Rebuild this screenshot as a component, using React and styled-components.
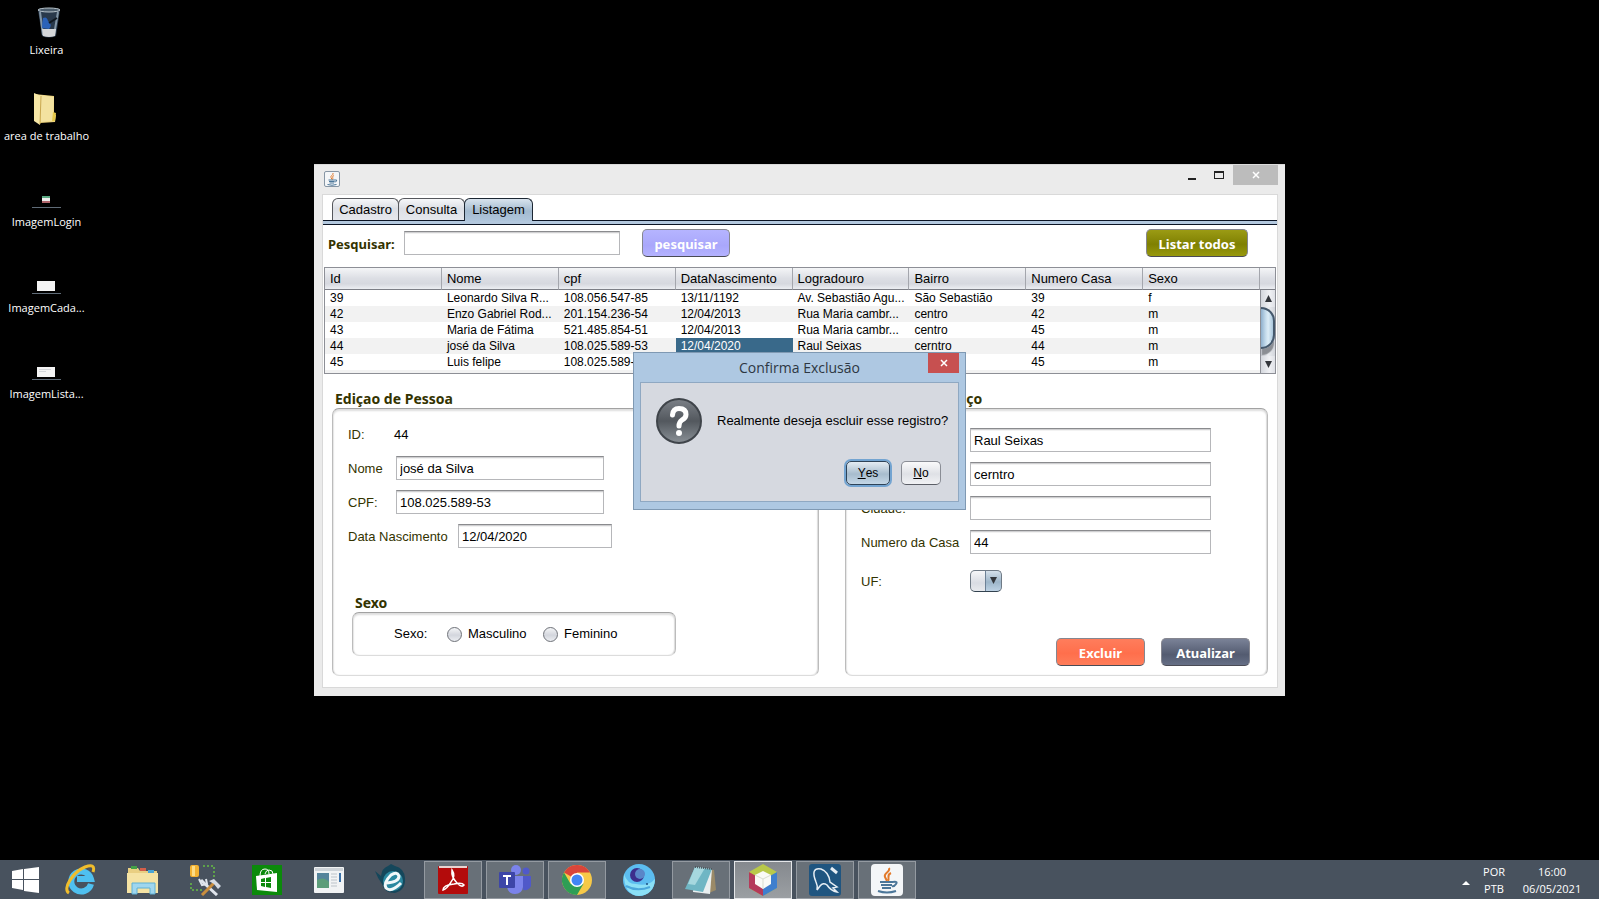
import React from "react";
import styled, { createGlobalStyle, css } from "styled-components";

const swing = '"Liberation Sans", Arial, sans-serif';
const segoe = '"Open Sans", "Segoe UI", sans-serif';
const segoeBold = '"Noto Sans", "Segoe UI", sans-serif';

const GlobalStyle = createGlobalStyle`
  *, *::before, *::after { box-sizing: border-box; }
  body { margin: 0; background: #000; }
  button, input, select { font: inherit; margin: 0; }
`;

const Screen = styled.div`
  min-height: 100vh;
  display: flex;
  flex-direction: column;
  background: #000;
  font: 12px/16px ${swing};
  color: #000;
`;

const Desktop = styled.main`
  position: relative;
  flex: 1;
  display: flex;
  align-items: center;
  justify-content: center;
`;

/* ---------- desktop shortcuts ---------- */

const Shortcuts = styled.nav`
  position: absolute;
  left: 0;
  top: 0;
  width: 93px;
`;

const Shortcut = styled.a`
  display: flex;
  flex-direction: column;
  align-items: center;
  height: 86px;
  padding-top: 6px;
  color: #fff;
  text-decoration: none;
  font: 11px/16px ${segoe};
  white-space: nowrap;
  svg { margin-bottom: 2px; flex: none; }
`;

/* ---------- application window ---------- */

const Window = styled.section`
  position: relative;
  width: min(971px, 100%);
  padding: 0 7px 8px 8px;
  background: #ebebeb;
  border-top: 1px solid #dadada;
`;

const TitleBar = styled.header`
  display: flex;
  align-items: flex-start;
  height: 29px;
  padding-left: 2px;
  > svg { margin-top: 6px; }
`;

const WindowControls = styled.div`
  display: flex;
  margin-left: auto;
`;

const Control = styled.button`
  display: grid;
  place-items: center;
  width: ${(p) => p.$width}px;
  height: 20px;
  padding: 0;
  border: 0;
  background: ${(p) => p.$bg || "transparent"};
`;

const Content = styled.div`
  padding: 3px 0 11px;
  background: #fff;
  border: 1px solid #d9d9d9;
`;

const Tabs = styled.div`
  display: flex;
  height: 22px;
  padding-left: 9px;
`;

const Tab = styled.button`
  position: relative;
  height: 22px;
  padding: 0;
  width: ${(p) => p.$width}px;
  margin-right: -1px;
  border: 1px solid #55575c;
  border-bottom: 0;
  border-radius: 6px 6px 0 0;
  background: linear-gradient(#f6f7f9, #dcdfe5 45%, #e6e8ed);
  font-size: 13px;
  ${(p) =>
    p.$active &&
    css`
      height: 23px;
      z-index: 1;
      border-color: #1c2733;
      background: linear-gradient(#d8e3ed, #a3bacf 55%, #b0c6dc);
    `}
`;

const TabStrip = styled.div`
  height: 5px;
  background: #b3c8de;
  border: solid #0b1424;
  border-width: 1px 0;
`;

const SearchRow = styled.form`
  display: flex;
  align-items: center;
  padding: 4px 29px 10px 5px;
`;

const SearchLabel = styled.label`
  width: 76px;
  padding-top: 2px;
  font: bold 13px/20px ${segoeBold};
  color: #333300;
`;

const TextInput = styled.input`
  width: ${(p) => p.$width}px;
  height: 24px;
  padding: 1px 3px 0;
  background: #fff;
  border: 1px solid #b6b7ba;
  border-top-color: #8a8b8e;
  border-radius: 0;
  outline: 0;
  box-shadow: inset 0 1px 0 #cfcfd1, inset 0 2px 0 #f2f2f2;
  font-size: 13px;
  color: #000;
`;

const tones = {
  lilac: "linear-gradient(#b5b4ff, #a9a7fb 60%, #b4b2ff)",
  olive: "linear-gradient(#9b9b14, #7f8002 55%, #98990c)",
  coral: "linear-gradient(#ff7d5c, #ff6f4c 55%, #ff7d5a)",
  slate: "linear-gradient(#7a8297, #535b70 60%, #666f86)",
};

const ActionButton = styled.button`
  width: ${(p) => p.$width}px;
  height: 28px;
  padding: 2px 0 0;
  border: 1px solid #85868f;
  border-bottom-color: #4a4b55;
  border-radius: 5px;
  background: ${(p) => tones[p.$tone]};
  color: #fff;
  font: bold 13px/20px ${segoeBold};
`;

const SearchButton = styled(ActionButton)`
  margin-left: 22px;
`;

const ListAllButton = styled(ActionButton)`
  margin-left: auto;
`;

/* ---------- table ---------- */

const TableFrame = styled.div`
  display: flex;
  height: 107px;
  margin: 0 1px;
  border: 1px solid #8d8f96;
  background: #f2f2f2;
`;

const headerFill = css`
  background: linear-gradient(#f4f5f7, #dcdee4 50%, #d6d8df 75%, #eceef2);
  border-bottom: 1px solid #7c7e86;
`;

const TableArea = styled.div`
  flex: 1;
  min-width: 0;
`;

const Table = styled.table`
  width: 100%;
  table-layout: fixed;
  border-collapse: separate;
  border-spacing: 0;
  th, td {
    padding: 0 5px;
    overflow: hidden;
    white-space: nowrap;
    text-align: left;
    font-weight: normal;
  }
  th {
    ${headerFill}
    height: 22px;
    border-right: 1px solid #a4a6ad;
    font-size: 13px;
    line-height: 20px;
  }
  td { height: 16px; padding-top: 1px; line-height: 15px; }
  tbody tr { background: #fff; }
  tbody tr:nth-child(even) { background: #f2f2f2; }
`;

const Cell = styled.td`
  ${(p) => p.$selected && css`background: #39698a; color: #fff;`}
`;

const ScrollColumn = styled.div`
  flex: none;
  width: 15px;
  display: flex;
  flex-direction: column;
`;

const ScrollCorner = styled.div`
  ${headerFill}
  height: 22px;
`;

const ScrollBar = styled.div`
  flex: 1;
  display: flex;
  flex-direction: column;
  overflow: hidden;
  border-left: 1px solid #8d8f96;
  background: linear-gradient(90deg, #bfc2c9, #eceef1 50%, #d3d6dc);
`;

const ScrollStep = styled.button`
  display: grid;
  place-items: center;
  height: 17px;
  padding: 0;
  border: 0;
  background: linear-gradient(90deg, #d4d7dd, #f0f1f4 60%, #dfe1e6);
`;

const ScrollTrack = styled.div`
  flex: 1;
`;

const ScrollThumb = styled.div`
  height: 42px;
  border: 2px solid #45586c;
  border-left: 0;
  border-radius: 0 15px 15px 0;
  background: linear-gradient(90deg, #8fb0cd, #c6dcec 40%, #dcecf6 60%, #a9c6dc);
  box-shadow: 0 7px 1px -1px #8b8e94;
`;

/* ---------- edit panels ---------- */

const Panels = styled.div`
  display: flex;
  gap: 26px;
  padding: 16px 9px 0;
`;

const Group = styled.section`
  flex: ${(p) => p.$grow} 1 0;
  min-width: 0;
  display: flex;
  flex-direction: column;
`;

const GroupTitle = styled.h2`
  margin: 0 3px;
  font: bold 14px/18px ${segoeBold};
  color: #333300;
  white-space: nowrap;
`;

const frame = css`
  border: 1px solid #bcbcbc;
  border-top-color: #a2a2a2;
  border-bottom-color: #dcdcdc;
  border-radius: 7px;
  box-shadow: inset 0 2px 2px #dedede, inset 1px 0 1px #ececec, inset -1px 0 1px #dcdcdc;
`;

const Panel = styled.div`
  ${frame}
  flex: 1;
  min-height: 268px;
  display: flex;
  flex-direction: column;
  gap: 10px;
  padding: ${(p) => p.$top}px 17px ${(p) => p.$bottom}px 15px;
`;

const Field = styled.div`
  display: flex;
  align-items: center;
  min-height: 24px;
  font-size: 13px;
  color: #333300;
`;

const FieldLabel = styled.label`
  flex: none;
  width: ${(p) => p.$width}px;
  padding-top: 2px;
  white-space: nowrap;
`;

const Value = styled.output`
  padding-top: 2px;
  color: #000;
`;

const StateField = styled(Field)`
  margin-top: 5px;
`;

const SelectBox = styled.span`
  position: relative;
  display: inline-flex;
  svg { position: absolute; right: 5px; top: 7px; pointer-events: none; }
`;

const Select = styled.select`
  appearance: none;
  width: 32px;
  height: 22px;
  border: 1px solid #6f7a86;
  border-bottom-color: #33424f;
  border-radius: 5px;
  background: linear-gradient(90deg, transparent 14px, #6d8196 14px 15px, transparent 15px),
    linear-gradient(#d5e0ea, #9db5c9 55%, #bdd2e4) 15px 0 / 16px 100% no-repeat,
    linear-gradient(#f6f7f9, #d9dce3 60%, #e8eaee);
`;

const SexGroup = styled.fieldset`
  width: 324px;
  max-width: 100%;
  margin: auto 0 0 4px;
  padding: 0;
  border: 0;
  color: #000;
`;

const SexTitle = styled.legend`
  padding: 0;
  margin: 0 3px;
  font: bold 14px/18px ${segoeBold};
  color: #333300;
`;

const SexBox = styled.div`
  ${frame}
  height: 44px;
  display: flex;
  align-items: center;
  padding-left: 41px;
  font-size: 13px;
`;

const SexCaption = styled.span`
  width: 53px;
`;

const RadioLabel = styled.label`
  display: flex;
  align-items: center;
  gap: 6px;
  width: 96px;
`;

const Radio = styled.input`
  appearance: none;
  width: 15px;
  height: 15px;
  border: 1px solid #6e7178;
  border-radius: 50%;
  background: linear-gradient(#f4f5f7, #d3d6dd 55%, #eceef2);
`;

const Actions = styled.div`
  display: flex;
  justify-content: flex-end;
  gap: 16px;
  margin-top: auto;
`;

/* ---------- confirmation dialog ---------- */

const DialogLayer = styled.div`
  position: absolute;
  inset: 0;
  display: grid;
  place-items: center;
  z-index: 2;
`;

const Dialog = styled.div`
  width: 333px;
  padding: 0 6px 7px;
  background: #aec8e2;
  border: 1px solid #7f99b3;
`;

const DialogBar = styled.div`
  display: grid;
  grid-template-columns: 31px 1fr 31px;
  height: 29px;
  h1 {
    margin: 0;
    text-align: center;
    font: 14px/30px ${segoe};
    color: #2d3742;
  }
`;

const DialogBody = styled.div`
  display: flex;
  flex-direction: column;
  justify-content: space-between;
  height: 120px;
  padding: 15px 17px 16px 15px;
  background: #d6d9e0;
  border: 1px solid #8fa8c2;
`;

const Message = styled.div`
  display: flex;
  align-items: center;
  gap: 15px;
  font-size: 13px;
  white-space: nowrap;
  svg { flex: none; }
`;

const DialogActions = styled.div`
  display: flex;
  justify-content: flex-end;
  gap: 11px;
`;

const DialogButton = styled.button`
  width: ${(p) => p.$width}px;
  height: 24px;
  padding: 1px 0 0;
  border: 1px solid #8a8d95;
  border-bottom-color: #5c5f67;
  border-radius: 5px;
  background: linear-gradient(#fafafb, #dfe1e6 55%, #f1f2f5);
  font-size: 12px;
  font-kerning: none;
  ${(p) =>
    p.$focused &&
    css`
      border-color: #2e4358;
      background: linear-gradient(#e4ecf3, #a7bccd 55%, #c4d7e6);
      box-shadow: 0 0 0 2px #73a4d1;
    `}
`;

/* ---------- taskbar ---------- */

const Taskbar = styled.footer`
  display: flex;
  height: 39px;
  padding-top: 1px;
  background: #48525e;
  overflow: hidden;
`;

const StartButton = styled.button`
  display: grid;
  place-items: center;
  width: 50px;
  padding: 0;
  border: 0;
  background: transparent;
`;

const TaskButton = styled.button`
  display: grid;
  place-items: center;
  width: 58px;
  height: 38px;
  margin: 0 2px;
  padding: 0;
  border: 1px solid transparent;
  background: transparent;
  ${(p) =>
    p.$state === "open" &&
    css`
      border-color: #949aa1;
      background: #687078;
    `}
  ${(p) =>
    p.$state === "active" &&
    css`
      border-color: #e4e6e9;
      background: linear-gradient(#85898e, #9b9fa3);
    `}
`;

const Tray = styled.div`
  display: flex;
  align-items: center;
  margin-left: auto;
  padding-right: 7px;
  color: #fff;
  font: 11px/17px ${segoe};
  text-align: center;
  white-space: nowrap;
`;

const TrayArrow = styled.button`
  width: 20px;
  height: 20px;
  padding: 0;
  border: 0;
  background: transparent;
`;

const TrayText = styled.div`
  width: ${(p) => p.$width}px;
  height: 34px;
`;

/* ---------- drawings ---------- */

const Svg = ({ w, h = w, box, children }) => (
  <svg width={w} height={h} viewBox={box || `0 0 ${w} ${h}`} aria-hidden="true">
    {children}
  </svg>
);

const BinIcon = () => (
  <Svg w={30} h={34}>
    <path d="M6 4 L28 4 L24 30 Q17 33 10 30 Z" fill="#29394b" />
    <path d="M8 6 L11 29 M26 6 L22 29" stroke="#8396a6" strokeWidth="2" />
    <ellipse cx="17" cy="4" rx="11" ry="2" fill="#4c5d6c" stroke="#b8c4cc" />
    <path d="M11 12 q4 -2 5 3 q5 4 1 8 l-7 -1 q0 -5 1 -10z" fill="#2b62b8" />
    <path d="M17 17 L25 12" stroke="#101820" strokeWidth="2" />
    <path d="M10 23 L24 23 L23 30 Q17 32 11 30 Z" fill="#d5d7d9" />
  </Svg>
);

const FolderIcon = () => (
  <Svg w={30} h={34}>
    <path d="M2 2 L22 4 L22 22 L24 23 L23 30 L8 31 L2 28 Z" fill="#ecd27c" />
    <path d="M8 3 L22 5 L21 29 L9 30 Z" fill="#f3e2a0" />
    <path d="M2 1 L9 4 L8 33 L2 29 Z" fill="#f7e7a6" />
    <path d="M9 4 L8 32" stroke="#c9a850" />
    <path d="M21 20 L24 21 L23 29 L20 29 Z" fill="#e6c84a" />
  </Svg>
);

const ThumbIcon = ({ kind }) => (
  <Svg w={30} h={34}>
    {kind === "login" ? (
      <>
        <rect x="10" y="18" width="8" height="7" fill="#eee" />
        <rect x="10" y="18" width="8" height="2" fill="#5aa982" />
        <rect x="10" y="23" width="8" height="2" fill="#b0646a" />
      </>
    ) : (
      <>
        <rect x="5" y="17" width="18" height="10" fill="#f4f4f4" />
        {kind === "list" && <path d="M7 19.500h12M7 21.500h7" stroke="#d3d6da" />}
      </>
    )}
    <path d="M0 29.500h29" stroke="#5f6b77" />
  </Svg>
);

const JavaCup = ({ size = 16 }) => (
  <Svg w={size} box="0 0 32 32">
    <rect x="1" y="1" width="30" height="30" rx="3" fill="#f4f6f8" stroke={size > 20 ? "#f4f6f8" : "#8796a5"} strokeWidth="2" />
    <path d="M18 4 C20 8 12 9 14 13 Q15 15 16 17 M20 9 C15 11 19 14 17 17" fill="none" stroke="#e37b2c" strokeWidth="2" />
    <path d="M9 18h13M10 21h11M11 24h9M22 18q5-1 3 2t-4 2" fill="none" stroke="#4b7699" strokeWidth="2" />
    <path d="M7 27q9 3 18 0" fill="none" stroke="#4b7699" strokeWidth="2" />
  </Svg>
);

const QuestionIcon = () => (
  <Svg w={46}>
    <defs>
      <linearGradient id="ball" x1="0" y1="0" x2="0" y2="1">
        <stop offset="0" stopColor="#7b8087" />
        <stop offset="0.500" stopColor="#53585e" />
        <stop offset="1" stopColor="#8a9096" />
      </linearGradient>
    </defs>
    <circle cx="23" cy="23" r="22" fill="url(#ball)" stroke="#3f444a" strokeWidth="2" />
    <path d="M16.500 17 Q17 10.500 23 10.500 Q30 10.500 30 16.500 Q30 20 26 22 Q23 24 23 28" fill="none" stroke="#fff" strokeWidth="5" strokeLinecap="round" />
    <circle cx="23" cy="35" r="3" fill="#fff" />
  </Svg>
);

const Cross = ({ color }) => (
  <Svg w={8} h={8}>
    <path d="M1 1L7 7M7 1L1 7" stroke={color} strokeWidth="1.500" />
  </Svg>
);

const Triangle = ({ up, w = 7, color = "#33363b" }) => (
  <Svg w={w} h={7} box="0 0 7 7">
    <path d={up ? "M0 7L3.500 0L7 7Z" : "M0 0H7L3.500 7Z"} fill={color} />
  </Svg>
);

const StartIcon = () => (
  <Svg w={27} h={26}>
    <path d="M0 4L11 2V12H0ZM12 2L27 0V12H12ZM0 13H11V23L0 21ZM12 13H27V26L12 24Z" fill="#fff" />
  </Svg>
);

const IeIcon = () => (
  <Svg w={32}>
    <path d="M26 20 A10 10 0 1 1 26 15 H12" fill="none" stroke="#4fc0f0" strokeWidth="6" />
    <path d="M4 29 C-3 25 8 8 20 3 Q31 -1 28 8" fill="none" stroke="#f0bd2c" strokeWidth="3" />
  </Svg>
);

const ExplorerIcon = () => (
  <Svg w={34} h={32}>
    <path d="M2 4h10l2 3h17v22h-29z" fill="#e9cf82" />
    <rect x="5" y="2" width="6" height="3" fill="#43a047" />
    <rect x="14" y="4" width="6" height="3" fill="#d35f4a" />
    <rect x="22" y="6" width="6" height="3" fill="#4aa6d6" />
    <path d="M1 9h31v20h-31z" fill="#f5e3a4" />
    <path d="M6 30v-11h23v11h-5v-6h-13v6z" fill="#9fd6ee" stroke="#5fb0d4" />
  </Svg>
);

const ToolsIcon = () => (
  <Svg w={32}>
    <rect x="1" y="1" width="9" height="12" rx="2" fill="#f2b233" />
    <rect x="3" y="2" width="3" height="10" fill="#fbdc86" />
    <path d="M14 2h11v11M2 19v7h11" fill="none" stroke="#5ea24a" strokeWidth="2" strokeDasharray="2 2" />
    <path d="M12 16l4 4L28 31" stroke="#dfe5ec" strokeWidth="3" />
    <path d="M26 18L13 31" stroke="#c98e3e" strokeWidth="3" />
    <path d="M20 17l5-2 7 7-3 3-4-5z" fill="#d4dbe4" />
    <path d="M10 15l3 6 5-1-1-5" fill="none" stroke="#dfe5ec" strokeWidth="2" />
  </Svg>
);

const StoreIcon = () => (
  <Svg w={30}>
    <rect width="30" height="30" fill="#0b8a0b" />
    <path d="M4 11L25 8V27L5 25Z" fill="#fff" />
    <path d="M8 11Q8 4 13 4Q17 4 17 9M13 9Q14 5 17 5Q21 5 21 9" fill="none" stroke="#fff" strokeWidth="1" />
    <path d="M9 14L13 13V17H9ZM14 13L19 12V17H14ZM9 18H13V22L9 21ZM14 18H19V23L14 22Z" fill="#0b8a0b" />
  </Svg>
);

const WindowDocIcon = () => (
  <Svg w={30} h={26}>
    <rect width="30" height="26" rx="1" fill="#f1f3f4" />
    <path d="M1 1h28v3h-28z" fill="#cdd3d8" />
    <rect x="3" y="6" width="12" height="15" fill="#55849b" />
    <path d="M3 21V13Q10 9 15 15V21Z" fill="#5c9d79" />
    <path d="M17 7h6M17 10h6M17 13h6M17 16h6M17 19h6" stroke="#bcc3c9" />
    <rect x="25" y="6" width="2" height="9" fill="#3a71a8" />
  </Svg>
);

const TealEIcon = () => (
  <Svg w={32}>
    <path d="M0 7L6 12Q7 4 13 2L16 0L20 2Q29 4 30 14Q31 26 20 29Q9 29 7 20Q3 15 0 7Z" fill="#15475b" />
    <circle cx="18" cy="17" r="10" fill="#2b88a0" />
    <path d="M12 19Q24 18 24 12Q22 7 16 11Q8 19 11 24Q16 29 26 19" fill="none" stroke="#f2f8fa" strokeWidth="3" />
  </Svg>
);

const AcrobatIcon = () => (
  <Svg w={30} h={28}>
    <rect width="30" height="28" rx="1" fill="#b30b0b" />
    <path d="M1 0H29V2H1Z" fill="#e9d3d0" />
    <path d="M14 4Q18 10 13 16Q9 23 5 24Q5 19 16 18Q24 16 26 19Q24 22 19 17Q13 11 14 4Z" fill="none" stroke="#fff" strokeWidth="1.500" />
  </Svg>
);

const TeamsIcon = () => (
  <Svg w={34} h={32}>
    <circle cx="18" cy="6" r="5" fill="#7b83eb" />
    <circle cx="28" cy="7" r="3.500" fill="#5059c9" />
    <path d="M23 12h10v10q-2 5-8 4z" fill="#5059c9" />
    <path d="M10 12h15v11q-1 7-8 7t-8-7z" fill="#7b83eb" />
    <rect x="1" y="8" width="16" height="16" rx="1" fill="#3d46a8" />
    <path d="M5 12h8M9 12v9" stroke="#fff" strokeWidth="2" />
  </Svg>
);

const ChromeIcon = () => (
  <Svg w={30}>
    <circle cx="15" cy="15" r="15" fill="#f7c948" />
    <path d="M15 15L2 7.500A15 15 0 0 1 28 7.500H15Z" fill="#d9453a" />
    <path d="M2 7.500A15 15 0 0 0 15 30L21.500 18.700L8.500 18.700Z" fill="#2f9e55" />
    <circle cx="15" cy="15" r="7" fill="#fff" />
    <circle cx="15" cy="15" r="5.500" fill="#4285f4" />
  </Svg>
);

const SwirlIcon = () => (
  <Svg w={32}>
    <circle cx="16" cy="16" r="16" fill="#5cbdf0" />
    <path d="M1 10Q4 20 13 20Q25 23 32 15Q31 31 16 32Q1 31 1 10Z" fill="#8be0f6" />
    <path d="M3 22Q14 28 27 23" fill="none" stroke="#4aa8dc" strokeWidth="2" />
    <circle cx="14" cy="11" r="7" fill="#3c2e8c" />
    <circle cx="17" cy="10" r="5" fill="#5a86c8" />
    <circle cx="24" cy="20" r="1" fill="#1d4f80" />
  </Svg>
);

const NotepadIcon = () => (
  <Svg w={32} h={30}>
    <path d="M10 2L29 5L31 25L24 28Z" fill="#9a8a68" />
    <path d="M10 2L27 4L25 29L8 27Z" fill="#e9eff0" />
    <path d="M10 2L27 4L18 27L0 24Z" fill="#6fb6c4" />
    <path d="M10 2L20 3L10 20L3 19Z" fill="#a6d8df" />
    <path d="M10 2L27 4" stroke="#4d555c" strokeWidth="2" strokeDasharray="1 1" />
  </Svg>
);

const NetBeansIcon = () => (
  <Svg w={30} h={32}>
    <path d="M15 0L29 8V24L15 32L1 24V8Z" fill="#b9c94a" />
    <path d="M1 8L8 12V20L15 24V32L1 24Z" fill="#b53a5a" />
    <path d="M29 8L22 12V20L15 24V32L29 24Z" fill="#3f7fce" />
    <path d="M15 7L23 11V20L15 25L7 20V11Z" fill="#fafaf6" />
    <path d="M7 11L15 15V25M15 15L23 11" fill="none" stroke="#d9ddd0" />
  </Svg>
);

const WorkbenchIcon = () => (
  <Svg w={32}>
    <rect width="32" height="32" rx="3" fill="#1f5580" />
    <path d="M8 26Q9 22 7 18Q1 3 12 5Q20 8 21 18L28 23L24 24L28 28Q22 27 18 21Q14 18 11 22Z" fill="none" stroke="#e6eef4" strokeWidth="1.500" />
    <path d="M22 4l6 5" stroke="#e6eef4" strokeWidth="3" />
  </Svg>
);

/* ---------- data ---------- */

const shortcuts = [
  ["Lixeira", <BinIcon />],
  ["area de trabalho", <FolderIcon />],
  ["ImagemLogin", <ThumbIcon kind="login" />],
  ["ImagemCada...", <ThumbIcon kind="form" />],
  ["ImagemLista...", <ThumbIcon kind="list" />],
];

const columns = ["Id", "Nome", "cpf", "DataNascimento", "Logradouro", "Bairro", "Numero Casa", "Sexo"];

const rows = [
  ["39", "Leonardo Silva R...", "108.056.547-85", "13/11/1192", "Av. Sebastião Agu...", "São Sebastião", "39", "f"],
  ["42", "Enzo Gabriel Rod...", "201.154.236-54", "12/04/2013", "Rua Maria cambr...", "centro", "42", "m"],
  ["43", "Maria de Fátima", "521.485.854-51", "12/04/2013", "Rua Maria cambr...", "centro", "45", "m"],
  ["44", "josé da Silva", "108.025.589-53", "12/04/2020", "Raul Seixas", "cerntro", "44", "m"],
  ["45", "Luis felipe", "108.025.589-53", "", "", "", "45", "m"],
];

const tasks = [
  ["Internet Explorer", <IeIcon />, ""],
  ["Explorador de Arquivos", <ExplorerIcon />, ""],
  ["Ferramentas", <ToolsIcon />, ""],
  ["Loja", <StoreIcon />, ""],
  ["Painel", <WindowDocIcon />, ""],
  ["Navegador", <TealEIcon />, ""],
  ["Acrobat", <AcrobatIcon />, "open"],
  ["Teams", <TeamsIcon />, "open"],
  ["Chrome", <ChromeIcon />, "open"],
  ["Gravador", <SwirlIcon />, ""],
  ["Bloco de notas", <NotepadIcon />, "open"],
  ["NetBeans", <NetBeansIcon />, "active"],
  ["MySQL Workbench", <WorkbenchIcon />, "open"],
  ["Java", <JavaCup size={32} />, "open"],
];

const TextField = ({ id, label, labelWidth, width, value }) => (
  <Field>
    <FieldLabel htmlFor={id} $width={labelWidth}>{label}</FieldLabel>
    <TextInput id={id} $width={width} defaultValue={value} />
  </Field>
);

export default function App() {
  return (
    <Screen>
      <GlobalStyle />
      <Desktop>
        <Shortcuts>
          {shortcuts.map(([name, icon]) => (
            <Shortcut key={name} href="#">
              {icon}
              {name}
            </Shortcut>
          ))}
        </Shortcuts>

        <Window>
          <TitleBar>
            <JavaCup />
            <WindowControls>
              <Control $width={26} aria-label="Minimizar">
                <Svg w={8} h={10}><path d="M0 9h8" stroke="#222" strokeWidth="2" /></Svg>
              </Control>
              <Control $width={28} aria-label="Maximizar">
                <Svg w={10} h={8}><path d="M0 0h10v8h-10zM1 2v5h8v-5z" fill="#222" fillRule="evenodd" /></Svg>
              </Control>
              <Control $width={45} $bg="#bcbcbc" aria-label="Fechar"><Cross color="#fff" /></Control>
            </WindowControls>
          </TitleBar>

          <Content>
            <Tabs role="tablist">
              <Tab role="tab" $width={67}>Cadastro</Tab>
              <Tab role="tab" $width={67}>Consulta</Tab>
              <Tab role="tab" $width={69} $active aria-selected="true">Listagem</Tab>
            </Tabs>
            <TabStrip />

            <SearchRow onSubmit={(e) => e.preventDefault()}>
              <SearchLabel htmlFor="busca">Pesquisar:</SearchLabel>
              <TextInput id="busca" $width={216} />
              <SearchButton $width={88} $tone="lilac">pesquisar</SearchButton>
              <ListAllButton type="button" $width={102} $tone="olive">Listar todos</ListAllButton>
            </SearchRow>

            <TableFrame>
              <TableArea>
                <Table>
                  <thead>
                    <tr>{columns.map((c) => <th key={c}>{c}</th>)}</tr>
                  </thead>
                  <tbody>
                    {rows.map((row) => (
                      <tr key={row[0]}>
                        {row.map((text, i) => (
                          <Cell key={i} $selected={row[0] === "44" && i === 3}>{text}</Cell>
                        ))}
                      </tr>
                    ))}
                  </tbody>
                </Table>
              </TableArea>
              <ScrollColumn>
                <ScrollCorner />
                <ScrollBar>
                  <ScrollStep aria-label="Subir"><Triangle up /></ScrollStep>
                  <ScrollThumb />
                  <ScrollTrack />
                  <ScrollStep aria-label="Descer"><Triangle /></ScrollStep>
                </ScrollBar>
              </ScrollColumn>
            </TableFrame>

            <Panels>
              <Group $grow={487}>
                <GroupTitle>Ediçao de Pessoa</GroupTitle>
                <Panel $top={13} $bottom={19}>
                  <Field>
                    <FieldLabel htmlFor="pessoa-id" $width={46}>ID:</FieldLabel>
                    <Value id="pessoa-id">44</Value>
                  </Field>
                  <TextField id="nome" label="Nome" labelWidth={48} width={208} value="josé da Silva" />
                  <TextField id="cpf" label="CPF:" labelWidth={48} width={208} value="108.025.589-53" />
                  <TextField id="nascimento" label="Data Nascimento" labelWidth={110} width={154} value="12/04/2020" />
                  <SexGroup>
                    <SexTitle>Sexo</SexTitle>
                    <SexBox>
                      <SexCaption>Sexo:</SexCaption>
                      <RadioLabel><Radio type="radio" name="sexo" />Masculino</RadioLabel>
                      <RadioLabel><Radio type="radio" name="sexo" />Feminino</RadioLabel>
                    </SexBox>
                  </SexGroup>
                </Panel>
              </Group>

              <Group $grow={423}>
                <GroupTitle>Ediçao de Endereço</GroupTitle>
                <Panel $top={19} $bottom={9}>
                  <TextField id="logradouro" label="Logradouro:" labelWidth={109} width={241} value="Raul Seixas" />
                  <TextField id="bairro" label="Bairro:" labelWidth={109} width={241} value="cerntro" />
                  <TextField id="cidade" label="Cidade:" labelWidth={109} width={241} value="" />
                  <TextField id="numero" label="Numero da Casa" labelWidth={109} width={241} value="44" />
                  <StateField>
                    <FieldLabel htmlFor="uf" $width={109}>UF:</FieldLabel>
                    <SelectBox>
                      <Select id="uf"><option></option></Select>
                      <Triangle />
                    </SelectBox>
                  </StateField>
                  <Actions>
                    <ActionButton $width={89} $tone="coral">Excluir</ActionButton>
                    <ActionButton $width={89} $tone="slate">Atualizar</ActionButton>
                  </Actions>
                </Panel>
              </Group>
            </Panels>
          </Content>

          <DialogLayer>
            <Dialog role="dialog" aria-labelledby="dialog-title">
              <DialogBar>
                <span />
                <h1 id="dialog-title">Confirma Exclusão</h1>
                <Control $width={31} $bg="#c75050" aria-label="Fechar"><Cross color="#fff" /></Control>
              </DialogBar>
              <DialogBody>
                <Message>
                  <QuestionIcon />
                  Realmente deseja escluir esse registro?
                </Message>
                <DialogActions>
                  <DialogButton $width={44} $focused><u>Y</u>es</DialogButton>
                  <DialogButton $width={40}><u>N</u>o</DialogButton>
                </DialogActions>
              </DialogBody>
            </Dialog>
          </DialogLayer>
        </Window>
      </Desktop>

      <Taskbar>
        <StartButton aria-label="Iniciar"><StartIcon /></StartButton>
        {tasks.map(([name, icon, state]) => (
          <TaskButton key={name} $state={state} aria-label={name}>{icon}</TaskButton>
        ))}
        <Tray>
          <TrayArrow aria-label="Mostrar ícones ocultos">
            <Svg w={8} h={4}><path d="M0 4L4 0L8 4Z" fill="#fff" /></Svg>
          </TrayArrow>
          <TrayText $width={36}>POR<br />PTB</TrayText>
          <TrayText $width={80}>16:00<br />06/05/2021</TrayText>
        </Tray>
      </Taskbar>
    </Screen>
  );
}
